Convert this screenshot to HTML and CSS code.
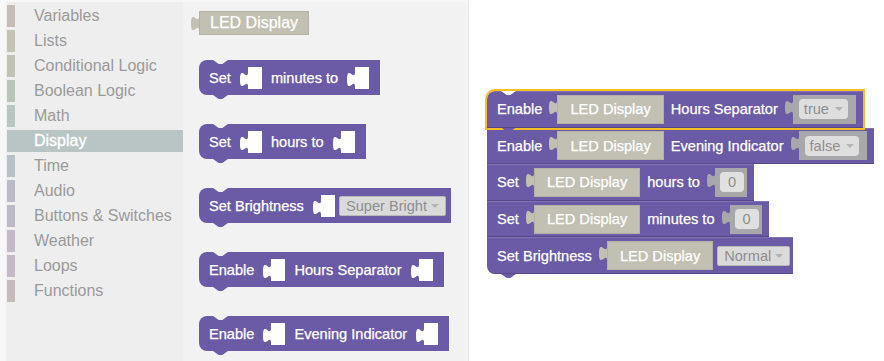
FILE: index.html
```html
<!DOCTYPE html>
<html lang="en">
<head>
<meta charset="UTF-8" />
<title>Blocks</title>
<link rel="stylesheet" href="styles.css">
</head>
<body>
<div class="app">
  <nav class="toolbox">
    <div class="cat cat-variables">Variables</div>
    <div class="cat cat-lists">Lists</div>
    <div class="cat cat-conditional">Conditional Logic</div>
    <div class="cat cat-boolean">Boolean Logic</div>
    <div class="cat cat-math">Math</div>
    <div class="cat cat-display selected">Display</div>
    <div class="cat cat-time">Time</div>
    <div class="cat cat-audio">Audio</div>
    <div class="cat cat-buttons">Buttons &amp; Switches</div>
    <div class="cat cat-weather">Weather</div>
    <div class="cat cat-loops">Loops</div>
    <div class="cat cat-functions">Functions</div>
  </nav>

  <aside class="flyout">
    <div class="value value-sm">
      <svg class="tab" width="8" height="24" viewBox="0 0 8 24"><path d="M8 5C8 15 0 -3 0 12.5C0 28 8 10 8 20Z"/></svg>
      <span class="value-body">LED Display</span>
    </div>

    <div class="stmt">
      <span>Set</span>
      <svg class="slot" width="22" height="22" viewBox="0 0 22 22"><path d="M8 0H22V22H8V20C8 10 0 28 0 12.5C0 -3 8 15 8 5Z"/></svg>
      <span>minutes to</span>
      <svg class="slot" width="22" height="22" viewBox="0 0 22 22"><path d="M8 0H22V22H8V20C8 10 0 28 0 12.5C0 -3 8 15 8 5Z"/></svg>
    </div>

    <div class="stmt">
      <span>Set</span>
      <svg class="slot" width="22" height="22" viewBox="0 0 22 22"><path d="M8 0H22V22H8V20C8 10 0 28 0 12.5C0 -3 8 15 8 5Z"/></svg>
      <span>hours to</span>
      <svg class="slot" width="22" height="22" viewBox="0 0 22 22"><path d="M8 0H22V22H8V20C8 10 0 28 0 12.5C0 -3 8 15 8 5Z"/></svg>
    </div>

    <div class="stmt stmt-tight">
      <span>Set Brightness</span>
      <svg class="slot" width="22" height="22" viewBox="0 0 22 22"><path d="M8 0H22V22H8V20C8 10 0 28 0 12.5C0 -3 8 15 8 5Z"/></svg>
      <span class="dropdown framed pull">Super Bright</span>
    </div>

    <div class="stmt">
      <span>Enable</span>
      <svg class="slot" width="22" height="22" viewBox="0 0 22 22"><path d="M8 0H22V22H8V20C8 10 0 28 0 12.5C0 -3 8 15 8 5Z"/></svg>
      <span>Hours Separator</span>
      <svg class="slot" width="22" height="22" viewBox="0 0 22 22"><path d="M8 0H22V22H8V20C8 10 0 28 0 12.5C0 -3 8 15 8 5Z"/></svg>
    </div>

    <div class="stmt">
      <span>Enable</span>
      <svg class="slot" width="22" height="22" viewBox="0 0 22 22"><path d="M8 0H22V22H8V20C8 10 0 28 0 12.5C0 -3 8 15 8 5Z"/></svg>
      <span>Evening Indicator</span>
      <svg class="slot" width="22" height="22" viewBox="0 0 22 22"><path d="M8 0H22V22H8V20C8 10 0 28 0 12.5C0 -3 8 15 8 5Z"/></svg>
    </div>
  </aside>

  <main class="workspace">
    <div class="stack">
      <div class="stmt first selected">
        <span>Enable</span>
        <span class="value">
          <svg class="tab" width="8" height="29" viewBox="0 0 8 29"><path d="M8 5C8 15 0 -3 0 12.5C0 28 8 10 8 20Z"/></svg>
          <span class="value-body">LED Display</span>
        </span>
        <span>Hours Separator</span>
        <span class="value shadow">
          <svg class="tab" width="8" height="29" viewBox="0 0 8 29"><path d="M8 5C8 15 0 -3 0 12.5C0 28 8 10 8 20Z"/></svg>
          <span class="value-body"><span class="dropdown">true</span></span>
        </span>
      </div>

      <div class="stmt">
        <span>Enable</span>
        <span class="value">
          <svg class="tab" width="8" height="29" viewBox="0 0 8 29"><path d="M8 5C8 15 0 -3 0 12.5C0 28 8 10 8 20Z"/></svg>
          <span class="value-body">LED Display</span>
        </span>
        <span>Evening Indicator</span>
        <span class="value shadow">
          <svg class="tab" width="8" height="29" viewBox="0 0 8 29"><path d="M8 5C8 15 0 -3 0 12.5C0 28 8 10 8 20Z"/></svg>
          <span class="value-body"><span class="dropdown">false</span></span>
        </span>
      </div>

      <div class="stmt">
        <span>Set</span>
        <span class="value">
          <svg class="tab" width="8" height="29" viewBox="0 0 8 29"><path d="M8 5C8 15 0 -3 0 12.5C0 28 8 10 8 20Z"/></svg>
          <span class="value-body">LED Display</span>
        </span>
        <span>hours to</span>
        <span class="value shadow shadow-num">
          <svg class="tab" width="8" height="29" viewBox="0 0 8 29"><path d="M8 5C8 15 0 -3 0 12.5C0 28 8 10 8 20Z"/></svg>
          <span class="value-body"><span class="num">0</span></span>
        </span>
      </div>

      <div class="stmt">
        <span>Set</span>
        <span class="value">
          <svg class="tab" width="8" height="29" viewBox="0 0 8 29"><path d="M8 5C8 15 0 -3 0 12.5C0 28 8 10 8 20Z"/></svg>
          <span class="value-body">LED Display</span>
        </span>
        <span>minutes to</span>
        <span class="value shadow shadow-num">
          <svg class="tab" width="8" height="29" viewBox="0 0 8 29"><path d="M8 5C8 15 0 -3 0 12.5C0 28 8 10 8 20Z"/></svg>
          <span class="value-body"><span class="num">0</span></span>
        </span>
      </div>

      <div class="stmt last stmt-tight">
        <span>Set Brightness</span>
        <span class="value">
          <svg class="tab" width="8" height="29" viewBox="0 0 8 29"><path d="M8 5C8 15 0 -3 0 12.5C0 28 8 10 8 20Z"/></svg>
          <span class="value-body">LED Display</span>
        </span>
        <span class="dropdown framed pull">Normal</span>
      </div>
    </div>
  </main>
</div>
</body>
</html>
```

FILE: styles.css
```css
* {
  box-sizing: border-box;
}
html, body {
  margin: 0;
  height: 100%;
}
body {
  font-family: "Liberation Sans", Arial, sans-serif;
  background-color: #fff;
  overflow: hidden;
}
.app {
  display: flex;
  height: 361px;
  background-color: #f7f7f7;
}

/* toolbox */
.toolbox {
  flex: none;
  width: 177px;
  margin: 2px 0 0 6px;
  padding-top: 3px;
  background-color: #eeeeee;
}
.cat {
  display: flex;
  align-items: center;
  height: 22px;
  margin: 0 0 3px 1px;
  font-size: 16px;
  color: #9a9a9a;
  white-space: nowrap;
}
.cat::before {
  content: "";
  width: 8px;
  height: 22px;
  margin-right: 19px;
  background-color: var(--swatch);
}
.cat.selected {
  background-color: #b9c5c5;
  color: #fff;
  -webkit-text-stroke: 0.3px #fff;
}
.cat-variables { --swatch: #c6bdb9; }
.cat-lists { --swatch: #c5c4b4; }
.cat-conditional { --swatch: #bfc5b4; }
.cat-boolean { --swatch: #b9c6b9; }
.cat-math { --swatch: #b8c6c2; }
.cat-display { --swatch: #b9c5c5; }
.cat-time { --swatch: #b8c1c6; }
.cat-audio { --swatch: #b9bcc8; }
.cat-buttons { --swatch: #bdb9c8; }
.cat-weather { --swatch: #c3b9c8; }
.cat-loops { --swatch: #c6b9c6; }
.cat-functions { --swatch: #c6bbba; }

/* flyout */
.flyout {
  flex: none;
  width: 285px;
  margin-top: 2px;
  padding: 9px 0 0 16px;
  background-color: #f2f2f2;
  border-top-right-radius: 8px;
  display: flex;
  flex-direction: column;
  align-items: flex-start;
  gap: 29px;
}
.flyout .value {
  margin: 0 0 -4px -8px;
}

/* workspace */
.workspace {
  flex: 1;
  background-color: #fff;
  border-left: 1px solid #ebebeb;
  padding: 91px 0 0 18px;
}
.stack {
  display: flex;
  flex-direction: column;
  align-items: flex-start;
}

/* statement blocks */
.stmt {
  position: relative;
  display: flex;
  align-items: center;
  gap: 9px;
  height: 35px;
  padding: 0 11px 0 10px;
  background-color: #6b5aa6;
  color: #fff;
  font-size: 14.6px;
  white-space: nowrap;
  border-radius: 8px 0 0 8px;
  -webkit-text-stroke: 0.25px #fff;
}
.stmt::before,
.stmt::after {
  content: "";
  position: absolute;
  left: 14px;
  width: 15px;
  height: 4px;
  clip-path: polygon(0 0, 100% 0, 62% 100%, 38% 100%);
}
.stmt::before {
  top: 0;
  background-color: #f2f2f2;
}
.stmt::after {
  bottom: -4px;
  background-color: #6b5aa6;
}
.stmt-tight {
  padding-right: 5px;
}
.pull {
  margin-left: -5px;
}

.stack .stmt {
  height: 36.6px;
  gap: 7px;
  padding-right: 7px;
  border-radius: 0;
  box-shadow: inset 0 1px rgba(255, 255, 255, 0.15), inset 0 -1px rgba(0, 0, 0, 0.18);
}
.stack .stmt::before {
  display: none;
}
.stack .stmt.first {
  border-top-left-radius: 8px;
}
.stack .stmt.first::before {
  display: block;
  background-color: #fff;
}
.stack .stmt.last {
  border-bottom-left-radius: 8px;
  padding-right: 3px;
}
.stack .stmt.last .pull {
  margin-left: -3px;
}
.stmt.selected {
  z-index: 1;
  outline: 2px solid #fbbd24;
}

.slot {
  flex: none;
  fill: #fff;
}

/* value blocks */
.value {
  display: inline-flex;
  align-items: flex-start;
  color: #c2c0b2;
}
.tab {
  flex: none;
  fill: currentColor;
}
.value-body {
  display: flex;
  align-items: center;
  height: 29px;
  padding: 0 13px;
  background-color: #c2c0b2;
  color: #fff;
  box-shadow: inset 0 0 0 1px rgba(0, 0, 0, 0.07);
}
.value-sm .value-body {
  height: 24px;
  padding: 0 11px;
  -webkit-text-stroke: 0.25px #fff;
}
.shadow {
  color: #a8a7aa;
}
.shadow .value-body {
  background-color: #a8a7aa;
  padding: 0 8px 0 6px;
  box-shadow: none;
}
.shadow-num .value-body {
  padding: 0 3px 0 5px;
}

/* fields */
.dropdown {
  display: inline-flex;
  align-items: center;
  gap: 6px;
  height: 20px;
  padding: 0 5px;
  background-color: #dedede;
  border-radius: 4px;
  color: #8e8e8e;
  font-size: 14.6px;
  -webkit-text-stroke: 0;
}
.dropdown::after {
  content: "";
  border-left: 4px solid transparent;
  border-right: 4px solid transparent;
  border-top: 4px solid #b3b3b3;
}
.dropdown.framed {
  gap: 4px;
  padding: 0 6px;
  background-color: #dadada;
  border: 1px solid #b9b9b9;
  border-radius: 2px;
}
.num {
  display: inline-flex;
  align-items: center;
  height: 20px;
  padding: 0 8px;
  background-color: #e0e0e0;
  border-radius: 4px;
  color: #8e8e8e;
  -webkit-text-stroke: 0;
}
```
